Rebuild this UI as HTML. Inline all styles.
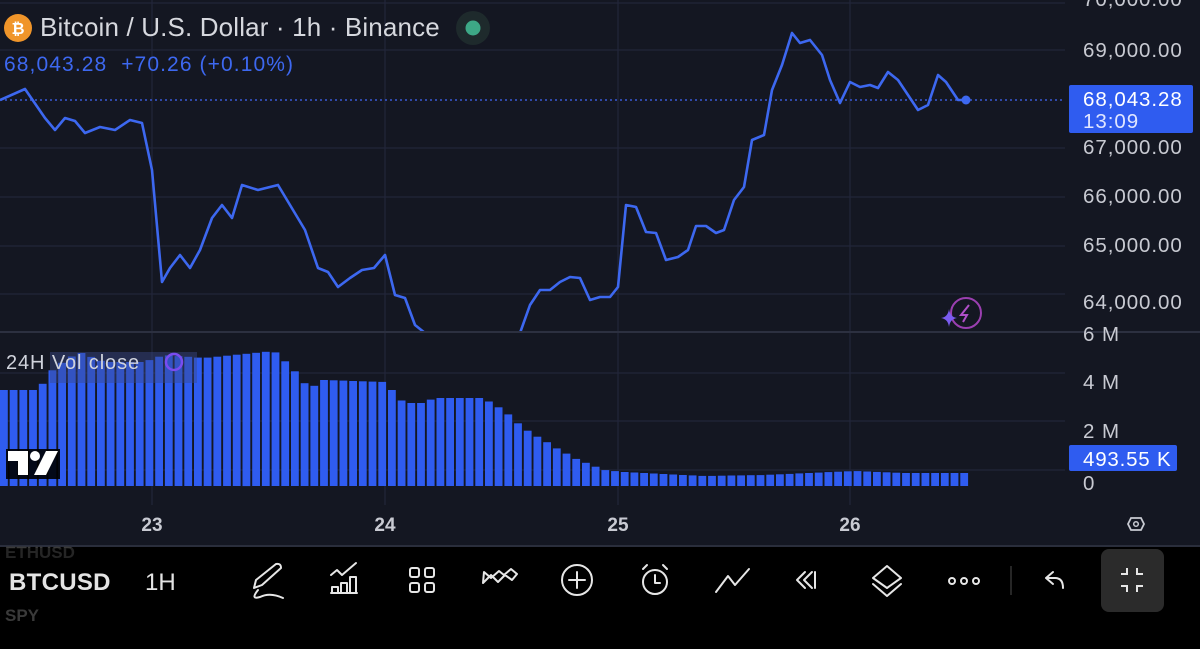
<!DOCTYPE html>
<html><head><meta charset="utf-8">
<style>
html,body{margin:0;padding:0;background:#000;width:1200px;height:649px;overflow:hidden}
svg{display:block}
text{font-family:"Liberation Sans",Arial,sans-serif}
</style></head>
<body>
<svg id="s" width="1200" height="649" viewBox="0 0 1200 649" xmlns="http://www.w3.org/2000/svg">
<rect x="0" y="0" width="1200" height="546" fill="#141722"/>
<rect x="0" y="546" width="1200" height="103" fill="#000"/>
<line x1="0" y1="546" x2="1200" y2="546" stroke="#2a2e3c" stroke-width="2"/>
<g stroke="#22263a" stroke-width="1.2">
<line x1="0" y1="3" x2="1065" y2="3"/>
<line x1="0" y1="50" x2="1065" y2="50"/>
<line x1="0" y1="148" x2="1065" y2="148"/>
<line x1="0" y1="197" x2="1065" y2="197"/>
<line x1="0" y1="246" x2="1065" y2="246"/>
<line x1="0" y1="294" x2="1065" y2="294"/>
<line x1="0" y1="373" x2="1065" y2="373"/>
<line x1="0" y1="421" x2="1065" y2="421"/>
<line x1="0" y1="470" x2="1065" y2="470"/>
<line x1="152" y1="0" x2="152" y2="505"/>
<line x1="385" y1="0" x2="385" y2="505"/>
<line x1="618" y1="0" x2="618" y2="505"/>
<line x1="850" y1="0" x2="850" y2="505"/>
</g>
<line x1="0" y1="332" x2="1200" y2="332" stroke="#2c3040" stroke-width="2"/>
<g id="bars" fill="#2f5cf0"></g>
<rect x="50" y="352" width="147" height="31" fill="#3a4a8a" opacity="0.45"/>
<text x="6" y="369" font-size="20" letter-spacing="0.9" fill="#d0d3dc">24H Vol close</text>
<circle cx="174" cy="362" r="8" fill="none" stroke="#7a4cf0" stroke-width="2.5"/>
<g transform="translate(8,451)">
<rect x="-2" y="-2" width="54" height="30" fill="#000" opacity="0.9"/>
<path d="M0 0 H20 V24 H10 V10 H0 Z" fill="#fff"/>
<circle cx="27" cy="5" r="5" fill="#fff"/>
<path d="M38 0 H50 L38 24 H26 Z" fill="#fff"/>
</g>
<line x1="0" y1="100" x2="1065" y2="100" stroke="#3a5ad8" stroke-width="1.5" stroke-dasharray="2 3"/>
<clipPath id="pc"><rect x="0" y="0" width="1065" height="331"/></clipPath>
<polyline clip-path="url(#pc)" fill="none" stroke="#3d68f0" stroke-width="2.6" stroke-linejoin="round" points="0,100 25,89 45,118 55,130 65,118 75,121 85,133 100,127 115,130 130,120 142,123 152,170 162,282 170,268 180,255 190,268 200,250 212,218 222,205 232,218 242,185 258,190 278,185 290,205 305,230 318,268 328,272 338,287 350,278 362,270 374,268 385,255 395,295 405,298 415,325 425,333 440,345 460,333 470,333 500,345 520,333 530,305 540,290 550,290 560,282 570,277 580,278 590,300 600,297 610,297 618,287 626,205 636,207 646,232 656,233 666,260 678,257 688,250 696,226 706,226 716,233 724,230 734,200 744,187 752,140 764,135 772,90 782,65 792,33 800,43 810,40 822,55 830,80 840,103 850,82 860,87 870,85 878,88 888,72 898,80 908,95 918,110 928,105 938,75 946,82 958,100 966,100"/>
<circle cx="966" cy="100" r="4.5" fill="#3d68f0"/>
<circle cx="18" cy="28" r="14" fill="#f0952a"/>
<text x="18" y="34" font-size="16" font-weight="bold" fill="#fff" text-anchor="middle">₿</text>
<text x="40" y="36" font-size="26" letter-spacing="0.15" fill="#d6d8de">Bitcoin / U.S. Dollar · 1h · Binance</text>
<circle cx="473" cy="28" r="17" fill="#1e2a2c"/>
<circle cx="473" cy="28" r="7.5" fill="#3da886"/>
<text x="4" y="71" font-size="21" letter-spacing="1.1" fill="#3d68f0" xml:space="preserve">68,043.28  +70.26 (+0.10%)</text>
<circle cx="966" cy="313" r="15" fill="none" stroke="#9a3fb0" stroke-width="2"/>
<path d="M969 305 L961 315 H967 L963 322" fill="none" stroke="#b04fc8" stroke-width="2"/>
<path d="M949 309 Q950 317 957 318 Q950 319 949 327 Q948 319 941 318 Q948 317 949 309Z" fill="#7a5cf0"/>
<g font-size="20.5" letter-spacing="0.95" fill="#c8cad2">
<text x="1083" y="6">70,000.00</text>
<text x="1083" y="57">69,000.00</text>
<text x="1083" y="154">67,000.00</text>
<text x="1083" y="203">66,000.00</text>
<text x="1083" y="252">65,000.00</text>
<text x="1083" y="309">64,000.00</text>
<text x="1083" y="341">6 M</text>
<text x="1083" y="389">4 M</text>
<text x="1083" y="438">2 M</text>
<text x="1083" y="490">0</text>
</g>
<rect x="1069" y="85" width="124" height="48" rx="2" fill="#2f5cf0"/>
<text x="1083" y="106" font-size="20.5" letter-spacing="0.95" fill="#fff">68,043.28</text>
<text x="1083" y="128" font-size="20.5" letter-spacing="0.95" fill="#e0e6ff">13:09</text>
<rect x="1069" y="445" width="108" height="26" rx="2" fill="#2f5cf0"/>
<text x="1083" y="466" font-size="20.5" letter-spacing="0.8" fill="#fff">493.55 K</text>
<g font-size="19" font-weight="bold" fill="#c8cad2" text-anchor="middle">
<text x="152" y="531">23</text><text x="385" y="531">24</text><text x="618" y="531">25</text><text x="850" y="531">26</text>
</g>
<path d="M1128 524 L1131 518 H1141 L1144 524 L1141 530 H1131 Z" fill="none" stroke="#c8cad2" stroke-width="1.8"/>
<circle cx="1136" cy="524" r="2.3" fill="none" stroke="#c8cad2" stroke-width="1.5"/>
<text x="5" y="558" font-size="17" font-weight="bold" fill="#3a3a3a">ETHUSD</text>
<text x="5" y="621" font-size="17" font-weight="bold" fill="#3a3a3a">SPY</text>
<rect x="0" y="548" width="130" height="12" fill="#000" opacity="0.35"/>
<text x="9" y="590" font-size="24" font-weight="bold" letter-spacing="0.3" fill="#e4e4e4">BTCUSD</text>
<text x="145" y="590" font-size="24" fill="#e4e4e4">1H</text>
<g fill="none" stroke="#e6e6e6" stroke-width="2" stroke-linecap="round" stroke-linejoin="round">
<path d="M254 588 L256 580 L276 564 Q281 563 281 568 L262 585 Z M258 590 Q250 600 260 597 Q270 592 283 598"/>
<path d="M331 575 L337 570 L342 575 L356 563 M332 593 V587 H338 V593 Z M341 593 V583 H347 V593 Z M350 593 V577 H356 V593 Z M331 593 H357"/>
<rect x="410" y="568" width="9" height="9" rx="2"/><rect x="425" y="568" width="9" height="9" rx="2"/><rect x="410" y="583" width="9" height="9" rx="2"/><rect x="425" y="583" width="9" height="9" rx="2"/>
<path d="M483 583 L491 575 L498 582 L505 575 L512 580 L517 574 L511 569 L504 575 L499 571 L491 578 L484 572 Z"/>
<circle cx="577" cy="580" r="15"/><path d="M577 572 V588 M569 580 H585"/>
<circle cx="655" cy="582" r="12"/><path d="M655 575 V583 H660 M643 569 L647 565 M667 569 L663 565"/>
<path d="M716 592 L728 576 L735 585 L749 569"/>
<path d="M805 572 L797 580 L805 588 M812 572 L804 580 L812 588 M815 572 V588"/>
<path d="M887 566 L901 578 L887 588 L873 578 Z M873 584 L887 596 L901 584"/>
<circle cx="952" cy="581" r="3"/><circle cx="964" cy="581" r="3"/><circle cx="976" cy="581" r="3"/>
<path d="M1046 578 L1053 572 M1046 578 L1053 584 M1046 578 H1055 Q1063 578 1063 588"/>
</g>
<line x1="1011" y1="566" x2="1011" y2="595" stroke="#333" stroke-width="1.5"/>
<rect x="1101" y="549" width="63" height="63" rx="8" fill="#2b2b2b"/>
<g fill="none" stroke="#e6e6e6" stroke-width="2">
<path d="M1127 568 V574 H1121 M1137 568 V574 H1143 M1127 592 V586 H1121 M1137 592 V586 H1143"/>
</g>
</svg>
<script>
(function(){
var g=document.getElementById('bars');
var key=[[0,390],[30,390],[40,383],[50,368],[75,352],[100,362],[140,362],[160,355],[200,358],[260,352],[270,351],[280,360],[290,370],[300,383],[310,386],[320,380],[380,382],[390,392],[400,403],[420,403],[430,398],[480,398],[490,405],[500,410],[510,420],[520,428],[530,435],[540,440],[550,447],[560,452],[570,458],[580,462],[590,466],[600,470],[620,472],[700,476],[760,475],[850,471],[900,473],[970,473]];
function barTop(x){for(var i=0;i<key.length-1;i++){if(x>=key[i][0]&&x<=key[i+1][0]){var t=(x-key[i][0])/(key[i+1][0]-key[i][0]);return key[i][1]+t*(key[i+1][1]-key[i][1]);}}return 473;}
var NS='http://www.w3.org/2000/svg';
for(var x=0;x<965;x+=9.7){var y=barTop(x);var r=document.createElementNS(NS,'rect');r.setAttribute('x',x.toFixed(1));r.setAttribute('y',y.toFixed(1));r.setAttribute('width','7.8');r.setAttribute('height',(486-y).toFixed(1));g.appendChild(r);}
})();
</script>
</body></html>
